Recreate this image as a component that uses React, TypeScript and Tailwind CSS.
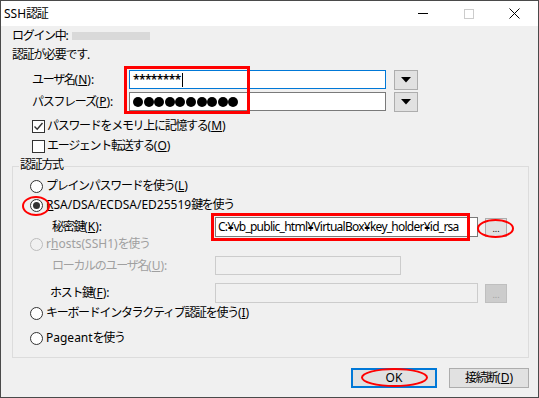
import React from "react";

const font = "font-['Noto_Sans','Noto_Sans_CJK_JP',sans-serif]";
const cjk = "tracking-[-1.3px]";
const latin = "tracking-[0px]";

function Key({ k }: { k: string }) {
  return (
    <span className={latin}>
      (<span className="underline underline-offset-[1px]">{k}</span>)
    </span>
  );
}

function Radio({ checked, disabled }: { checked?: boolean; disabled?: boolean }) {
  return (
    <span
      className={
        disabled
          ? "flex h-[13px] w-[13px] shrink-0 items-center justify-center rounded-full border border-[#bcbcbc] bg-[#f0f0f0]"
          : "flex h-[13px] w-[13px] shrink-0 items-center justify-center rounded-full border border-[#333333] bg-white"
      }
    >
      {checked ? <span className="h-[7px] w-[7px] rounded-full bg-[#333333]" /> : null}
    </span>
  );
}

function Checkbox({ checked }: { checked?: boolean }) {
  return (
    <span className="flex h-[13px] w-[13px] shrink-0 items-center justify-center border border-[#333333] bg-white">
      {checked ? (
        <svg width="11" height="11" viewBox="0 0 11 11">
          <path d="M1.5 5.5 L4.2 8.2 L9.5 2" fill="none" stroke="#333" strokeWidth="1.4" />
        </svg>
      ) : null}
    </span>
  );
}

function DropButton() {
  return (
    <div className="flex h-[20px] w-[24px] items-center justify-center border border-[#adadad] bg-[#e1e1e1]">
      <svg width="10" height="6" viewBox="0 0 10 6">
        <path d="M0 0 H10 L5 5.5 Z" fill="#000" />
      </svg>
    </div>
  );
}

function DotsButton({ disabled }: { disabled?: boolean }) {
  return (
    <div
      className={
        disabled
          ? "flex h-[19px] w-[22px] items-end justify-center border border-[#bfbfbf] bg-[#cccccc] pb-[3px] text-[9px] leading-none text-[#a0a0a0]"
          : "flex h-[19px] w-[22px] items-end justify-center border border-[#adadad] bg-[#e1e1e1] pb-[3px] text-[9px] leading-none text-black"
      }
    >
      ...
    </div>
  );
}

export default function App() {
  return (
    <div
      className={`relative flex h-[398px] w-[539px] flex-col overflow-hidden whitespace-nowrap border border-[#4a4a4a] bg-[#f0f0f0] text-[12px] leading-none text-black ${font}`}
    >
      {/* title bar */}
      <div className="flex h-[25px] shrink-0 items-center bg-white pl-[3px]">
        <span className={cjk}>
          <span className={latin}>SSH</span>認証
        </span>
        <div className="ml-auto flex h-full items-center">
          <div className="flex w-[46px] items-center justify-center">
            <span className="h-px w-[10px] bg-black" />
          </div>
          <div className="flex w-[46px] items-center justify-center">
            <span className="h-[10px] w-[10px] border border-[#cccccc]" />
          </div>
          <div className="flex w-[46px] items-center justify-center pr-[1px]">
            <svg width="11" height="11" viewBox="0 0 11 11">
              <path d="M0.5 0.5 L10.5 10.5 M10.5 0.5 L0.5 10.5" stroke="#000" strokeWidth="1" />
            </svg>
          </div>
        </div>
      </div>

      <div className="flex flex-col pl-[11px] pr-[9px]">
        <div className="mt-[2px] flex h-[16px] items-center">
          <span className={`w-[60px] ${cjk}`}>ログイン中:</span>
          <span className="h-[8px] w-[78px] bg-[#d9d9d9]" />
        </div>
        <div className={`mt-[3px] flex h-[16px] items-center ${cjk}`}>認証が必要です.</div>

        <div className="mt-[7px] flex h-[19px] items-center">
          <span className={`w-[117px] pl-[20px] ${cjk}`}>
            ユーザ名<Key k="N" />:
          </span>
          <div className="flex h-[19px] w-[257px] items-center border border-[#0078d7] bg-white pl-[3px]">
            <span className="text-[12px] font-semibold tracking-[-0.6px]">********</span>
            <span className="ml-[1px] h-[14px] w-px bg-black" />
          </div>
          <div className="ml-[8px]">
            <DropButton />
          </div>
        </div>
        <div className="mt-[3px] flex h-[19px] items-center">
          <span className={`w-[117px] pl-[20px] ${cjk}`}>
            パスフレーズ<Key k="P" />:
          </span>
          <div className="flex h-[19px] w-[257px] items-center gap-[0.6px] border border-[#7a7a7a] bg-white pl-[3px]">
            {Array.from({ length: 10 }).map((_, i) => (
              <span key={i} className="h-[10px] w-[10px] rounded-full bg-black" />
            ))}
          </div>
          <div className="ml-[8px]">
            <DropButton />
          </div>
        </div>

        <div className="mt-[8px] flex h-[14px] items-center gap-[2px] pl-[20px]">
          <Checkbox checked />
          <span className={cjk}>
            パスワードをメモリ上に記憶する<Key k="M" />
          </span>
        </div>
        <div className="mt-[6px] flex h-[14px] items-center gap-[2px] pl-[20px]">
          <Checkbox />
          <span className={cjk}>
            エージェント転送する<Key k="O" />
          </span>
        </div>

        {/* 認証方式 group */}
        <div className="relative mt-[13px] flex h-[192px] w-[517px] flex-col border border-[#dcdcdc]">
          <span className={`absolute left-[6px] top-[-8px] bg-[#f0f0f0] px-[1px] ${cjk}`}>認証方式</span>

          <div className="mt-[11px] flex h-[16px] items-center gap-[3px] pl-[17px]">
            <Radio />
            <span className={cjk}>
              プレインパスワードを使う<Key k="L" />
            </span>
          </div>
          <div className="mt-[3px] flex h-[16px] items-center gap-[3px] pl-[17px]">
            <Radio checked />
            <span className={cjk}>
              <span className={latin}>
                <span className="underline underline-offset-[1px]">R</span>SA/DSA/ECDSA/ED25519
              </span>
              鍵を使う
            </span>
          </div>
          <div className="mt-[4px] flex h-[20px] items-center">
            <span className={`w-[202px] pl-[39px] ${cjk}`}>
              秘密鍵<Key k="K" />:
            </span>
            <div className="flex h-[20px] w-[263px] items-center overflow-hidden border border-[#7a7a7a] bg-white pl-[2px] tracking-[-0.75px]">
              C:¥vb_public_html¥VirtualBox¥key_holder¥id_rsa
            </div>
            <div className="ml-[7px]">
              <DotsButton />
            </div>
          </div>
          <div className="flex h-[14px] items-center gap-[3px] pl-[17px] text-[#a0a0a0]">
            <Radio disabled />
            <span className={cjk}>
              <span className={latin}>
                r<span className="underline underline-offset-[1px]">h</span>osts(SSH1)
              </span>
              を使う
            </span>
          </div>
          <div className="mt-[5px] flex h-[19px] items-center">
            <span className={`w-[202px] pl-[39px] text-[#a0a0a0] ${cjk}`}>
              ローカルのユーザ名<Key k="U" />:
            </span>
            <div className="h-[19px] w-[186px] border border-[#cccccc] bg-[#f0f0f0]" />
          </div>
          <div className="mt-[8px] flex h-[20px] items-center">
            <span className={`w-[202px] pl-[37px] ${cjk}`}>
              ホスト鍵<Key k="F" />:
            </span>
            <div className="h-[20px] w-[263px] border border-[#cccccc] bg-[#f0f0f0]" />
            <div className="ml-[7px]">
              <DotsButton disabled />
            </div>
          </div>
          <div className="mt-[2px] flex h-[16px] items-center gap-[3px] pl-[17px]">
            <Radio />
            <span className={cjk}>
              キーボードインタラクティブ認証を使う<Key k="I" />
            </span>
          </div>
          <div className="mt-[9px] flex h-[16px] items-center gap-[3px] pl-[17px]">
            <Radio />
            <span className={cjk}>
              <span className={latin}>Pageant</span>を使う
            </span>
          </div>
        </div>

        <div className="mt-[10px] flex justify-end gap-[12px]">
          <button className="flex h-[20px] w-[86px] items-center justify-center border-2 border-[#0078d7] bg-[#e1e1e1]">
            OK
          </button>
          <button className={`flex h-[20px] w-[80px] items-center justify-center border border-[#adadad] bg-[#e1e1e1] ${cjk}`}>
            接続断<Key k="D" />
          </button>
        </div>
      </div>

      {/* red annotations */}
      <div className="pointer-events-none absolute left-[123px] top-[65px] h-[48px] w-[126px] border-[3px] border-[#ff0000]" />
      <div className="pointer-events-none absolute left-[210px] top-[212px] h-[28px] w-[259px] border-[3px] border-[#ff0000]" />
      <div className="pointer-events-none absolute left-[21px] top-[195px] h-[20px] w-[28px] rounded-[50%] border-2 border-[#ff0000]" />
      <div className="pointer-events-none absolute left-[476px] top-[218px] h-[19px] w-[37px] rounded-[50%] border-2 border-[#ff0000]" />
      <div className="pointer-events-none absolute left-[360px] top-[367px] h-[19px] w-[67px] rounded-[50%] border-2 border-[#ff0000]" />
    </div>
  );
}
